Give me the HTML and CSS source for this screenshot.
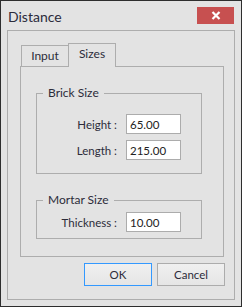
FILE: index.html
```html
<html>
	<head>
		<title>Distance</title>
		<link rel="stylesheet" href="styles.css">
	</head>
	<body>
		<div class="window">
			<div class="titlebar">
				<span class="title">Distance</span>
				<div class="close">
					<svg width="10" height="9" viewBox="0 0 10 9">
						<path d="M1.5 1 L8.5 8 M8.5 1 L1.5 8" stroke="#ffffff" stroke-width="2.2" fill="none"/>
					</svg>
				</div>
			</div>
			<div class="frame">
				<div class="tabs">
					<div class="tab">Input</div>
					<div class="tab active">Sizes</div>
				</div>
				<div class="panel">
					<fieldset class="group brick">
						<legend>Brick Size</legend>
						<div class="row">
							<label>Height :</label>
							<input class="field" type="text" value="65.00">
						</div>
						<div class="row">
							<label>Length :</label>
							<input class="field" type="text" value="215.00">
						</div>
					</fieldset>
					<fieldset class="group mortar">
						<legend>Mortar Size</legend>
						<div class="row">
							<label>Thickness :</label>
							<input class="field" type="text" value="10.00">
						</div>
					</fieldset>
				</div>
				<div class="buttons">
					<button class="btn default">OK</button>
					<button class="btn">Cancel</button>
				</div>
			</div>
		</div>
	</body>
</html>
```

FILE: styles.css
```css
body {
	margin: 0;
	padding: 0;
	font-family: Lato, "Noto Sans", sans-serif;
	font-size: 11px;
	color: #2c2c3a;
}

.window {
	width: 242px;
	height: 307px;
	box-sizing: border-box;
	border: 1px solid #2e2e2e;
	background: #e3e3e3;
}

.titlebar {
	display: flex;
	justify-content: space-between;
	align-items: flex-start;
	height: 29px;
	padding: 6px 7px 0 7px;
	box-sizing: border-box;
}

.title {
	font-size: 14px;
	line-height: 18px;
	margin-top: 1px;
	color: #2b2b3b;
}

.close {
	width: 37px;
	height: 17px;
	background: #c75050;
	display: flex;
	align-items: center;
	justify-content: center;
}

.frame {
	margin: 0 6px;
	height: 270px;
	box-sizing: border-box;
	border: 1px solid #adadad;
}

.tabs {
	display: flex;
	align-items: flex-end;
	margin: 12px 0 -1px 13px;
	position: relative;
}

.tab {
	box-sizing: border-box;
	border: 1px solid #adadad;
	background: #e3e3e3;
	text-align: center;
	font-size: 12px;
}

.tab:first-child {
	width: 47px;
	height: 22px;
	line-height: 19px;
	border-right: none;
}

.tab.active {
	width: 48px;
	height: 24px;
	line-height: 20px;
	border-bottom: none;
}

.panel {
	margin: 0 10px 0 12px;
	height: 191px;
	box-sizing: border-box;
	border: 1px solid #adadad;
	padding: 18px 21px 0 15px;
}

.group {
	margin: 0;
	padding: 0;
	border: 1px solid #adadad;
	min-width: 0;
}

.group legend {
	margin-left: 6px;
	padding: 0 5px;
	line-height: 16px;
	font-size: 12px;
}

.brick {
	padding: 13px 0 13px 0;
}

.mortar {
	margin-top: 18px;
	padding: 4px 0 6px 0;
}

.row {
	display: flex;
	align-items: center;
}

.row + .row {
	margin-top: 6px;
}

.row label {
	width: 80px;
	text-align: right;
	margin-right: 9px;
	font-size: 11.5px;
}

.field {
	width: 55px;
	height: 20px;
	box-sizing: border-box;
	border: 1px solid #acacac;
	background: #ffffff;
	padding: 0 3px;
	margin: 0;
	font-family: Lato, "Noto Sans", sans-serif;
	font-size: 11.5px;
	color: #222222;
	outline: none;
}

.buttons {
	display: flex;
	justify-content: flex-end;
	gap: 5px;
	margin: 6px 9px 0 0;
}

.btn {
	width: 68px;
	height: 23px;
	box-sizing: border-box;
	border: 1px solid #acacac;
	background: linear-gradient(#f0f0f0, #e5e5e5);
	font-family: Lato, "Noto Sans", sans-serif;
	font-size: 11.5px;
	color: #2c2c3a;
	padding: 0;
	margin: 0;
}

.btn.default {
	border-color: #3399ff;
}
```
